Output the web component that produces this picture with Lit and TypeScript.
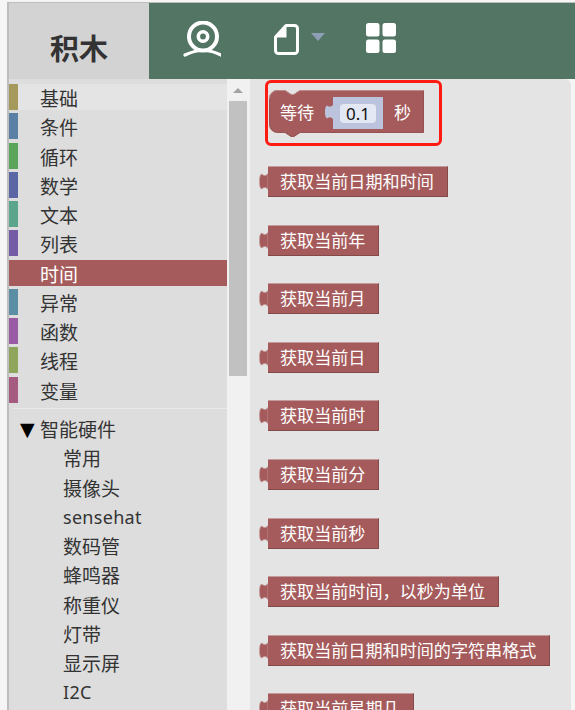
import { LitElement, html, css, svg } from "lit";
import { customElement } from "lit/decorators.js";

const CATS: [string, string][] = [
  ["基础", "#a5995b"], ["条件", "#5b80a5"], ["循环", "#5ba55b"], ["数学", "#5b67a5"],
  ["文本", "#5ba58c"], ["列表", "#745ba5"], ["时间", "#a55b5b"], ["异常", "#5b8ea5"],
  ["函数", "#9a5ba5"], ["线程", "#8fa55b"], ["变量", "#a55b80"],
];
const SUBS = ["常用", "摄像头", "sensehat", "数码管", "蜂鸣器", "称重仪", "灯带", "显示屏", "I2C"];
const BLOCKS = [
  "获取当前日期和时间", "获取当前年", "获取当前月", "获取当前日", "获取当前时", "获取当前分",
  "获取当前秒", "获取当前时间，以秒为单位", "获取当前日期和时间的字符串格式", "获取当前星期几",
];

const tab = svg`<path d="M9 7.500 C7 10 5 10 3.500 8.500 C1.500 7 .5 11 .5 15.500 C.5 20 1.500 24 3.500 22.500 C5 21 7 21 9 23.500 Z" fill="#a55b5b" stroke="#c49a9a" stroke-width="0.8"/>`;

@customElement("app-root")
export class AppRoot extends LitElement {
  static styles = css`
    :host {
      display: block; width: 575px; height: 710px; overflow: hidden; background: #f5f5f5;
      padding-top: 2px; box-sizing: border-box;
      font-family: "Noto Sans CJK SC", "Noto Sans", sans-serif;
    }
    .frame { margin-left: 7px; border-top: 1px solid #bdbdbd; border-left: 2px solid #bdbdbd; height: 720px; }
    .head { display: flex; height: 76px; background: #527564; }
    .title {
      width: 140px; background: #d3d3d3; color: #333; font-size: 29px; font-weight: 700;
      display: flex; align-items: center; justify-content: center; padding-top: 11px; box-sizing: border-box;
      line-height: 40px;
    }
    .head svg { display: block; flex: none; }
    .cam { margin: 18px 0 0 34px; }
    .file { margin: 21px 0 0 53px; }
    .caret { margin: 30px 0 0 12px; }
    .grid { margin: 20px 0 0 41px; }
    .main { display: flex; height: 640px; }
    .side { width: 218px; background: #ddd; padding-top: 5px; flex: none; color: #333; font-size: 19px; overflow: hidden; }
    .row {
      height: 26px; margin-bottom: 3.25px; display: flex; align-items: center; line-height: 26px;
      box-sizing: border-box;
    }
    .row.first { background: #e4e4e4; }
    .row.sel { background: #a55b5b; color: #fff; }
    .sw { width: 9px; height: 100%; flex: none; }
    .lbl { margin-left: 22px; padding-top: 2px; }
    .rule { height: 1px; background: #e9e9e9; margin: 5px 0 7px 4px; }
    .tree { padding-left: 11px; padding-top: 1px; }
    .tri { width: 20px; font-size: 19px; font-family: "DejaVu Sans", sans-serif; color: #000; }
    .sub { padding-left: 54px; padding-top: 1px; }
    .latin { font-family: "Noto Sans", sans-serif; font-size: 18px; letter-spacing: .3px; }
    .bar { width: 23px; flex: none; background: #f1f1f1; padding: 9px 3px 0 2px; box-sizing: border-box; }
    .arrow { width: 0; height: 0; margin: 0 auto; border: 5px solid transparent; border-top: 0; border-bottom: 5px solid #a3a3a3; }
    .thumb { height: 275px; background: #c1c1c1; margin-top: 8px; }
    .fly { width: 321px; flex: none; background: #e4e4e4; border-top-right-radius: 6px; padding-top: 1px; box-sizing: border-box; overflow: hidden; }
    .mark {
      width: 177px; height: 66px; box-sizing: border-box; border: 3px solid #ff1a12; border-radius: 6px;
      margin-left: 15px; padding: 7px 0 0 1px;
    }
    .wait { position: relative; width: 155px; height: 47px; display: flex; align-items: flex-start; color: #fff; font-size: 17.1px; }
    .bg { position: absolute; left: 0; top: 0; }
    .t { position: relative; line-height: 43px; height: 43px; white-space: nowrap; }
    .t1 { margin-left: 11px; width: 34px; }
    .itab { position: relative; margin: 15px 0 0 11px; flex: none; display: block; }
    .field {
      position: relative; width: 50px; height: 32px; margin-top: 7px; background: #bcc3dc; flex: none;
      display: flex; align-items: center; justify-content: center;
    }
    .num {
      width: 36px; height: 19px; background: #e4e8f4; border-radius: 4px; color: #111; font-size: 17px;
      font-family: "Noto Sans", sans-serif; line-height: 19px; text-align: center;
    }
    .t2 { margin-left: 11px; }
    .list { display: flex; flex-direction: column; gap: 27.6px; margin-top: 20px; padding-left: 9px; }
    .blk { display: flex; height: 31px; align-items: stretch; }
    .blk svg { display: block; flex: none; }
    .body {
      background: #a55b5b; color: #fff; font-size: 17.1px; white-space: nowrap;
      padding: 0 13px 0 12px; line-height: 28px; box-sizing: border-box;
      border-top: 1px solid #c49a9a; border-bottom: 1px solid #844949; border-right: 1px solid #844949;
    }
  `;

  render() {
    return html`<div class="frame">
      <div class="head">
        <div class="title">积木</div>
        <svg class="cam" width="38" height="38" viewBox="0 0 38 38" fill="none" stroke="#fff">
          <circle cx="20" cy="15.5" r="14" stroke-width="4"/>
          <circle cx="20" cy="15.5" r="4.7" stroke-width="3.6"/>
          <path d="M2 34 C10 30 14 29.5 20 29.5 S30 30 38 34" stroke-width="3.2" stroke-linecap="round"/>
        </svg>
        <svg class="file" width="25" height="31" viewBox="0 0 25 31" fill="none">
          <path d="M12 1.5 H20.5 A3 3 0 0 1 23.5 4.500 V26.500 A3 3 0 0 1 20.500 29.500 H4.500 A3 3 0 0 1 1.500 26.500 V13 Z" stroke="#fff" stroke-width="3" stroke-linejoin="round"/>
          <path d="M12.500 1.500 V13.500 H1.500 Z" fill="#fff"/>
        </svg>
        <svg class="caret" width="14" height="8" viewBox="0 0 14 8"><path d="M0 0 H14 L7 8 Z" fill="#8e9fb5"/></svg>
        <svg class="grid" width="30" height="30" viewBox="0 0 30 30" fill="#fff">
          <rect x="0" y="0" width="13.500" height="13.500" rx="2.500"/>
          <rect x="16.500" y="0" width="13.500" height="13.500" rx="2.500"/>
          <rect x="0" y="16.500" width="13.500" height="13.500" rx="2.500"/>
          <rect x="16.500" y="16.500" width="13.500" height="13.500" rx="2.500"/>
        </svg>
      </div>
      <div class="main">
        <div class="side">
          ${CATS.map(([n, c], i) => html`<div class="row ${i === 0 ? "first" : ""} ${n === "时间" ? "sel" : ""}">
            <span class="sw" style="background:${c}"></span><span class="lbl">${n}</span>
          </div>`)}
          <div class="rule"></div>
          <div class="row tree"><span class="tri">▼</span><span>智能硬件</span></div>
          ${SUBS.map((s) => html`<div class="row sub"><span class="${/^[a-zA-Z]/.test(s) ? "latin" : ""}">${s}</span></div>`)}
        </div>
        <div class="bar"><div class="arrow"></div><div class="thumb"></div></div>
        <div class="fly">
          <div class="mark">
            <div class="wait">
              <svg class="bg" width="155" height="47" viewBox="0 0 155 47">
                <path d="M.5 8.500 A8 8 0 0 1 8.500 .5 H16 l6 4 h3 l6 -4 H154.500 V42.500 H31 l-6 4 h-3 l-6 -4 H8.500 A8 8 0 0 1 .5 34.500 Z" fill="#a55b5b" stroke="#975353" stroke-width="1"/>
                <path d="M.5 8.500 A8 8 0 0 1 8.500 .5 H16 l6 4 h3 l6 -4 H154.500" fill="none" stroke="#bd8a8a" stroke-width="1"/>
              </svg>
              <span class="t t1">等待</span>
              <svg class="itab" width="8" height="14" viewBox="0 0 8 14"><path d="M8 0 C6 2 4 2 3 1 C1 0 0 3 0 7 C0 11 1 14 3 13 C4 12 6 12 8 14 Z" fill="#bcc3dc"/></svg>
              <div class="field"><span class="num">0.1</span></div>
              <span class="t t2">秒</span>
            </div>
          </div>
          <div class="list">
            ${BLOCKS.map((b) => html`<div class="blk">
              <svg width="9" height="31" viewBox="0 0 9 31">${tab}</svg>
              <div class="body">${b}</div>
            </div>`)}
          </div>
        </div>
      </div>
    </div>`;
  }
}
